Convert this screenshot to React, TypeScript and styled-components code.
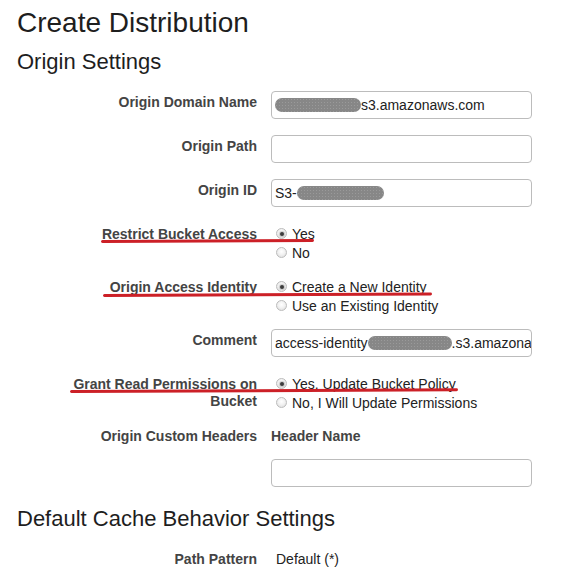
import React from 'react';
import styled, { createGlobalStyle } from 'styled-components';

const Global = createGlobalStyle`
  html, body { margin: 0; padding: 0; background: #fff; }
  body { font-family: "Liberation Sans", Arial, sans-serif; color: #222; }
`;

const Page = styled.div`
  width: 575px;
  padding-top: 7px;
`;

const Title = styled.h1`
  margin: 0 0 0 17px;
  font-size: 28px;
  line-height: 32px;
  font-weight: normal;
  color: #1e1e1e;
`;

const SectionTitle = styled.h2<{ $top: number }>`
  margin: ${p => p.$top}px 0 0 17px;
  font-size: 22px;
  line-height: 26px;
  font-weight: normal;
  color: #1e1e1e;
`;

const Form = styled.div<{ $top: number }>`
  display: flex;
  flex-direction: column;
  gap: 16px;
  margin: ${p => p.$top}px 0 0 67px;
`;

const Row = styled.div<{ $gapBefore?: number }>`
  position: relative;
  display: grid;
  grid-template-columns: 190px 261px;
  column-gap: 14px;
  align-items: start;
  margin-top: ${p => p.$gapBefore ?? 0}px;
`;

const Label = styled.div<{ $pad: number }>`
  padding-top: ${p => p.$pad}px;
  text-align: right;
  font-size: 14px;
  line-height: 17px;
  font-weight: bold;
  color: #444;
`;

const TextBox = styled.div`
  box-sizing: border-box;
  height: 28px;
  padding: 0 3px;
  display: flex;
  align-items: center;
  border: 1px solid #bcbcbc;
  border-radius: 4px;
  font-size: 14px;
  color: #222;
  white-space: nowrap;
  overflow: hidden;
`;

const Redacted = styled.span<{ $w: number }>`
  display: inline-block;
  flex: none;
  width: ${p => p.$w}px;
  height: 14px;
  border-radius: 7px;
  background-color: #878787;
  background-image: radial-gradient(rgba(255, 255, 255, 0.16) 0.6px, transparent 0.9px);
  background-size: 3px 3px;
`;

const RadioGroup = styled.div`
  display: flex;
  flex-direction: column;
`;

const Option = styled.div`
  display: flex;
  align-items: center;
  gap: 5px;
  height: 19px;
  padding-left: 5px;
  font-size: 14px;
  color: #222;
  white-space: nowrap;
`;

const RadioDot = styled.span<{ $on?: boolean }>`
  position: relative;
  box-sizing: border-box;
  flex: none;
  width: 11px;
  height: 11px;
  border-radius: 50%;
  border: 1px solid #bcbcbc;
  background: radial-gradient(circle at 50% 40%, #ffffff 0%, #f2f2f2 45%, #d8d8d8 100%);
  &::after {
    content: '';
    display: ${p => (p.$on ? 'block' : 'none')};
    position: absolute;
    left: 50%;
    top: 50%;
    width: 4px;
    height: 4px;
    margin: -2px 0 0 -2px;
    border-radius: 50%;
    background: #3c3c3c;
    box-shadow: 0 0 1px 1px rgba(120, 120, 120, 0.35);
  }
`;

const Mark = styled.div<{ $left: number; $width: number; $top: number }>`
  position: absolute;
  left: ${p => p.$left}px;
  top: ${p => p.$top}px;
  width: ${p => p.$width}px;
  height: 3px;
  border-radius: 2px;
  background: #cc2027;
  transform: rotate(-0.25deg);
  transform-origin: left center;
`;

const Stack = styled.div`
  display: flex;
  flex-direction: column;
  gap: 13px;
`;

const SubHead = styled.div`
  font-size: 14px;
  line-height: 19px;
  font-weight: bold;
  color: #444;
`;

const Plain = styled.div`
  padding-left: 5px;
  font-size: 14px;
  line-height: 19px;
  color: #222;
`;

type Opt = { text: string; on?: boolean };

const Radios = ({ options }: { options: Opt[] }) => (
  <RadioGroup>
    {options.map(o => (
      <Option key={o.text}>
        <RadioDot $on={o.on} />
        {o.text}
      </Option>
    ))}
  </RadioGroup>
);

export default function App() {
  return (
    <Page>
      <Global />
      <Title>Create Distribution</Title>
      <SectionTitle $top={10}>Origin Settings</SectionTitle>
      <Form $top={16}>
        <Row>
          <Label $pad={3}>Origin Domain Name</Label>
          <TextBox>
            <Redacted $w={86} />
            s3.amazonaws.com
          </TextBox>
        </Row>
        <Row>
          <Label $pad={3}>Origin Path</Label>
          <TextBox />
        </Row>
        <Row>
          <Label $pad={3}>Origin ID</Label>
          <TextBox>
            S3-
            <Redacted $w={87} />
          </TextBox>
        </Row>
        <Row $gapBefore={1}>
          <Label $pad={2}>Restrict Bucket Access</Label>
          <Radios options={[{ text: 'Yes', on: true }, { text: 'No' }]} />
          <Mark $left={34} $width={213} $top={16} />
        </Row>
        <Row $gapBefore={-1}>
          <Label $pad={2}>Origin Access Identity</Label>
          <Radios
            options={[
              { text: 'Create a New Identity', on: true },
              { text: 'Use an Existing Identity' },
            ]}
          />
          <Mark $left={36} $width={329} $top={17} />
        </Row>
        <Row $gapBefore={-2}>
          <Label $pad={3}>Comment</Label>
          <TextBox>
            access-identity
            <Redacted $w={84} />
            .s3.amazona
          </TextBox>
        </Row>
        <Row $gapBefore={1}>
          <Label $pad={2}>Grant Read Permissions on Bucket</Label>
          <Radios
            options={[
              { text: 'Yes, Update Bucket Policy', on: true },
              { text: 'No, I Will Update Permissions' },
            ]}
          />
          <Mark $left={3} $width={388} $top={16} />
        </Row>
        <Row $gapBefore={-1}>
          <Label $pad={1}>Origin Custom Headers</Label>
          <Stack>
            <SubHead>Header Name</SubHead>
            <TextBox />
          </Stack>
        </Row>
      </Form>
      <SectionTitle $top={19}>Default Cache Behavior Settings</SectionTitle>
      <Form $top={18}>
        <Row>
          <Label $pad={1}>Path Pattern</Label>
          <Plain>Default (*)</Plain>
        </Row>
      </Form>
    </Page>
  );
}
